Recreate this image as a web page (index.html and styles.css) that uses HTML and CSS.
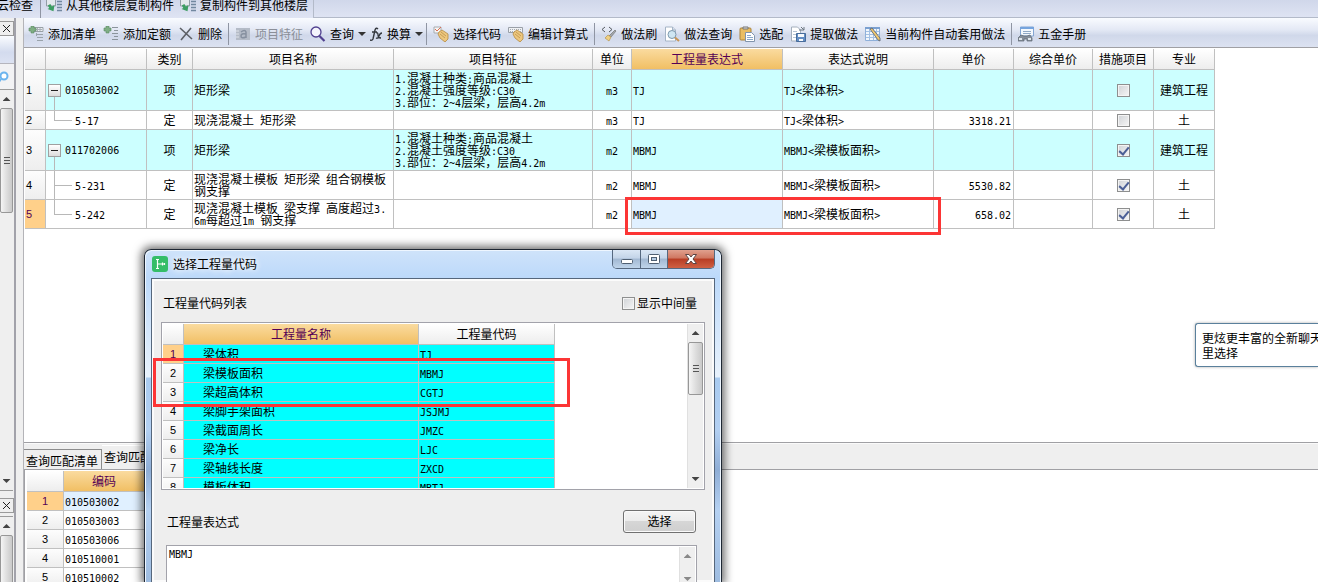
FILE: index.html
```html
<!DOCTYPE html>
<html lang="zh-CN">
<head>
<meta charset="utf-8">
<title>选择工程量代码</title>
<link rel="stylesheet" href="styles.css">
</head>
<body>
<svg class="defs" aria-hidden="true">
  <symbol id="list-add" viewBox="0 0 16 16">
    <path d="M6 1.500h9v4H6z" fill="#eef1f4" stroke="#98a0a6"/>
    <path d="M7 3.500h7M9.500 2v3M12 2v3" stroke="#a9b0b8"/>
    <path d="M1 2h2V0h3v2h2v3H6v2H3V5H1z" fill="#7fae84" stroke="#5d8b66" stroke-width=".6"/>
    <path d="M9 8.500h6M9 11.500h6M9 14.500h6M8.500 7v3" stroke="#9aa3ab"/>
  </symbol>
  <symbol id="quota-add" viewBox="0 0 16 16">
    <path d="M1 2h2V0h3v2h2v3H6v2H3V5H1z" fill="#7fae84" stroke="#5d8b66" stroke-width=".6"/>
    <path d="M9 1.500h6M11 4.500h4M9 7.500h6M11 10.500h4M9 13.500h6" stroke="#8b949c"/>
  </symbol>
  <symbol id="floor-copy" viewBox="0 0 16 16">
    <path d="M.5 0h9v9h-9z" fill="#e3e8ec" stroke="#929da6"/>
    <path d="M11 1.500h5M11 4.500h5M11 7.500h5M11 10.500h5M11 13.500h5" stroke="#7288a0" stroke-width="1.500"/>
    <path d="M3 7h3v3h3l-4 5-4-5h2z" fill="#3d9d62" transform="rotate(-30 5 10)"/>
  </symbol>
  <symbol id="hand" viewBox="0 0 16 16">
    <path d="M6 6l3-2 6 4v5l-3 3-5-4-2-4z" fill="#edc77e" stroke="#b58a43" stroke-width=".8"/>
    <path d="M7 8l5 4M8 6l5 4" stroke="#b58a43" stroke-width=".7"/>
  </symbol>
</svg>

<nav class="ribbon">
  <button class="tool">云检查</button>
  <i class="sep"></i>
  <button class="tool"><svg class="ico"><use href="#floor-copy"/></svg>从其他楼层复制构件</button>
  <button class="tool"><svg class="ico"><use href="#floor-copy"/></svg>复制构件到其他楼层</button>
  <i class="ribbon-rest"></i>
</nav>

<div class="workspace">
  <aside class="side">
    <button class="pane-close" aria-label="关闭"><svg viewBox="0 0 9 9"><path d="M1 1l7 7M8 1L1 8" stroke="#222"/></svg></button>
    <div class="pane-head"></div>
    <button class="pane-find" aria-label="查找"><svg viewBox="0 0 10 14"><circle cx="4" cy="6" r="3.500" fill="#fff" stroke="#6cb4ee" stroke-width="2"/><path d="M1 9l-2 3" stroke="#6cb4ee" stroke-width="2"/></svg></button>
    <div class="scroll side-scroll"><i class="up"></i><b class="thumb"></b><i class="down"></i></div>
    <button class="pane-close second" aria-label="关闭"><svg viewBox="0 0 9 9"><path d="M1 1l7 7M8 1L1 8" stroke="#222"/></svg></button>
    <div class="scroll side-scroll low"><i class="up"></i><b class="thumb"></b></div>
  </aside>

  <main class="main">
    <div class="toolbar">
      <button class="tool"><svg class="ico"><use href="#list-add"/></svg>添加清单</button>
      <button class="tool"><svg class="ico"><use href="#quota-add"/></svg>添加定额</button>
      <button class="tool"><svg class="ico" viewBox="0 0 16 16"><path d="M2 2l12 11M13 2L3 14" stroke="#5d6066" stroke-width="1.600" fill="none"/></svg>删除</button>
      <i class="sep"></i>
      <button class="tool" disabled><svg class="ico" viewBox="0 0 16 16"><rect x="1" y="2" width="14" height="12" fill="#b4bbc7"/><path d="M1 5h3M1 8h3M1 11h3" stroke="#dfe3ea"/><path d="M6 6q4-3 5 0v6M11 8q-5-1-5 2t5 1" stroke="#8690a0" stroke-width="1.500" fill="none"/></svg>项目特征</button>
      <button class="tool drop"><svg class="ico" viewBox="0 0 16 16"><circle cx="6" cy="6" r="5" fill="#f4f4fc" stroke="#50408f" stroke-width="1.300"/><path d="M9.500 10l5 5" stroke="#50408f" stroke-width="2.200"/></svg>查询<i class="caret"></i></button>
      <button class="tool drop"><svg class="ico fx" viewBox="0 0 13 16"><path d="M8 3q-2-2-3 1L3 13q-1 2-3 1M2 6h5" stroke="#34383e" stroke-width="1.400" fill="none"/><path d="M6 7q2-1 2 2t3 3M12 7q-2 0-3 3t-3 2" stroke="#34383e" stroke-width="1.300" fill="none"/></svg>换算<i class="caret"></i></button>
      <i class="sep"></i>
      <button class="tool"><svg class="ico" viewBox="0 0 16 16"><path d="M1 1h7v6H1z" fill="#f5f5f5" stroke="#a8abb0"/><path d="M2 3l2 2 4-4" stroke="#d96f55" fill="none"/><use href="#hand"/></svg>选择代码</button>
      <button class="tool"><svg class="ico" viewBox="0 0 16 16"><path d="M0.500 1.500h14v5h-14z" fill="#f0f2f5" stroke="#9aa0a8"/><path d="M2 3.500h12M2 5.500h12" stroke="#a4abb3" stroke-dasharray="1 1"/><use href="#hand"/></svg>编辑计算式</button>
      <i class="sep"></i>
      <button class="tool"><svg class="ico" viewBox="0 0 16 16"><path d="M4 1L1 3.500 4 6M8 1l3 2.500L8 6" stroke="#555a60" fill="none"/><path d="M14 4l1 1-5 6-2-1z" fill="#a3a8ac" stroke="#777" stroke-width=".7"/><path d="M7 9l3 2-2 4-4-3z" fill="#efd084" stroke="#b6954e" stroke-width=".7"/></svg>做法刷</button>
      <button class="tool"><svg class="ico" viewBox="0 0 16 16"><path d="M1.500 1h7l3 3v11h-10z" fill="#fff" stroke="#a5b4c6"/><path d="M8.500 1v3h3" fill="#d5e0ec" stroke="#a5b4c6"/><circle cx="8" cy="8.500" r="4" fill="#cfe6f2" stroke="#7d98ad"/><path d="M11 11.500l4 3.500" stroke="#c79557" stroke-width="2"/></svg>做法查询</button>
      <button class="tool"><svg class="ico" viewBox="0 0 16 16"><rect x="1" y="2" width="11" height="12" rx="1" fill="#e9bd63" stroke="#aa833c"/><path d="M4 3V1h5v2z" fill="#ddd" stroke="#777"/><path d="M6.500 6.500h6l3 3v6h-9z" fill="#fff" stroke="#8194ac"/><path d="M8 9.500h4M8 11.500h6M8 13.500h6" stroke="#8aa8cb"/></svg>选配</button>
      <button class="tool"><svg class="ico" viewBox="0 0 16 16"><path d="M1.500 1h6l3 3v11h-9z" fill="#fff" stroke="#a5b0bd"/><path d="M3 5.500h4M3 8.500h3M3 11.500h3" stroke="#b6c4d4"/><path d="M6.500 7.500h9v8h-9z" fill="#648ec4" stroke="#476c9b"/><path d="M8 8h6v3H8zM9 13h4v2H9z" fill="#f6f9fc"/><path d="M9 4h5V1M14 4l-3-3" stroke="#6d7780" fill="none"/></svg>提取做法</button>
      <button class="tool"><svg class="ico" viewBox="0 0 16 16"><path d="M.5 1.500h14v13H.5z" fill="#f1f6fc" stroke="#8fb0da"/><path d="M1 5.500h13M1 8.500h13M1 11.500h13M4.500 2v12M8.500 2v12M11.500 2v12" stroke="#a3c0e4"/><path d="M0 1h15v2H0z" fill="#7ba0d0"/><path d="M5 3l2-1 8 10v3l-2-1z" fill="#f1c970" stroke="#536075" stroke-width=".8"/></svg>当前构件自动套用做法</button>
      <i class="sep"></i>
      <button class="tool"><svg class="ico" viewBox="0 0 16 16"><path d="M2.500 1h13v9h-13z" fill="#f4f8fd" stroke="#83a5d2"/><path d="M2 1h14v2H2z" fill="#76a4de"/><path d="M5 5.500h8M5 7.500h8" stroke="#90a9c5"/><path d="M0 12l3-3 3 1h3l3-1 2 3v3H9v-2H6v2H0z" fill="#868f9a" stroke="#5c6570" stroke-width=".7"/><path d="M1 12h3v2H1zM10 12h3v2h-3z" fill="#dfe6ec"/></svg>五金手册</button>
    </div>

    <section class="bill">
      <table class="grid">
        <colgroup><col class="w21"><col class="w101"><col class="w46"><col class="w201"><col class="w199"><col class="w39"><col class="w151"><col class="w151"><col class="w80"><col class="w79"><col class="w61"><col class="w61"></colgroup>
        <thead>
          <tr><th></th><th>编码</th><th>类别</th><th>项目名称</th><th>项目特征</th><th>单位</th><th class="hot">工程量表达式</th><th>表达式说明</th><th>单价</th><th>综合单价</th><th>措施项目</th><th>专业</th></tr>
        </thead>
        <tbody>
          <tr class="item">
            <th scope="row">1</th>
            <td class="tree parent"><button class="fold" aria-label="折叠"></button><span class="n">010503002</span></td>
            <td class="c">项</td><td>矩形梁</td>
            <td><span class="n">1.</span>混凝土种类<span class="n">:</span>商品混凝土<br><span class="n">2.</span>混凝土强度等级<span class="n">:C30</span><br><span class="n">3.</span>部位：<span class="n">2~4</span>层梁，层高<span class="n">4.2m</span></td>
            <td class="c"><span class="n">m3</span></td><td><span class="n">TJ</span></td><td><span class="n">TJ&lt;</span>梁体积<span class="n">&gt;</span></td><td></td><td></td>
            <td class="c"><input type="checkbox" class="check" aria-label="措施项目 1"></td><td class="c">建筑工程</td>
          </tr>
          <tr>
            <th scope="row">2</th>
            <td class="tree child last"><span class="n">5-17</span></td>
            <td class="c">定</td><td>现浇混凝土<span class="n"> </span>矩形梁</td><td></td>
            <td class="c"><span class="n">m3</span></td><td><span class="n">TJ</span></td><td><span class="n">TJ&lt;</span>梁体积<span class="n">&gt;</span></td><td class="r"><span class="n">3318.21</span></td><td></td>
            <td class="c"><input type="checkbox" class="check" aria-label="措施项目 2"></td><td class="c">土</td>
          </tr>
          <tr class="item">
            <th scope="row">3</th>
            <td class="tree parent"><button class="fold" aria-label="折叠"></button><span class="n">011702006</span></td>
            <td class="c">项</td><td>矩形梁</td>
            <td><span class="n">1.</span>混凝土种类<span class="n">:</span>商品混凝土<br><span class="n">2.</span>混凝土强度等级<span class="n">:C30</span><br><span class="n">3.</span>部位：<span class="n">2~4</span>层梁，层高<span class="n">4.2m</span></td>
            <td class="c"><span class="n">m2</span></td><td><span class="n">MBMJ</span></td><td><span class="n">MBMJ&lt;</span>梁模板面积<span class="n">&gt;</span></td><td></td><td></td>
            <td class="c"><input type="checkbox" class="check" aria-label="措施项目 3" checked></td><td class="c">建筑工程</td>
          </tr>
          <tr>
            <th scope="row">4</th>
            <td class="tree child"><span class="n">5-231</span></td>
            <td class="c">定</td><td>现浇混凝土模板<span class="n"> </span>矩形梁<span class="n"> </span>组合钢模板<br>钢支撑</td><td></td>
            <td class="c"><span class="n">m2</span></td><td><span class="n">MBMJ</span></td><td><span class="n">MBMJ&lt;</span>梁模板面积<span class="n">&gt;</span></td><td class="r"><span class="n">5530.82</span></td><td></td>
            <td class="c"><input type="checkbox" class="check" aria-label="措施项目 4" checked></td><td class="c">土</td>
          </tr>
          <tr>
            <th scope="row" class="current">5</th>
            <td class="tree child last"><span class="n">5-242</span></td>
            <td class="c">定</td><td>现浇混凝土模板<span class="n"> </span>梁支撑<span class="n"> </span>高度超过<span class="n">3.</span><br><span class="n">6m</span>每超过<span class="n">1m </span>钢支撑</td><td></td>
            <td class="c"><span class="n">m2</span></td><td class="picked"><span class="n">MBMJ</span></td><td><span class="n">MBMJ&lt;</span>梁模板面积<span class="n">&gt;</span></td><td class="r"><span class="n">658.02</span></td><td></td>
            <td class="c"><input type="checkbox" class="check" aria-label="措施项目 5" checked></td><td class="c">土</td>
          </tr>
        </tbody>
      </table>
    </section>

    <div class="tabs">
      <button class="tab">查询匹配清单</button>
      <button class="tab active">查询匹配定额</button>
    </div>
    <section class="match">
      <table class="grid codes">
        <colgroup><col class="w37"><col class="w81"></colgroup>
        <thead><tr><th></th><th class="hot">编码</th></tr></thead>
        <tbody>
          <tr><th scope="row" class="current">1</th><td class="picked"><span class="n">010503002</span></td></tr>
          <tr><th scope="row">2</th><td><span class="n">010503003</span></td></tr>
          <tr><th scope="row">3</th><td><span class="n">010503006</span></td></tr>
          <tr><th scope="row">4</th><td><span class="n">010510001</span></td></tr>
          <tr><th scope="row">5</th><td><span class="n">010510002</span></td></tr>
        </tbody>
      </table>
    </section>
  </main>
</div>

<div class="dialog" role="dialog" aria-labelledby="dlg-title">
  <header class="titlebar">
    <svg class="logo" viewBox="0 0 16 16"><rect width="16" height="16" rx="3" fill="#35bd69"/><path d="M4 3.500h3M4 12.500h3M5.500 3.500v9M5.500 8h7M10.500 6.500v3M12.500 7v2" stroke="#fff" stroke-width="1.200" fill="none"/></svg>
    <h1 id="dlg-title">选择工程量代码</h1>
    <div class="winbtns">
      <button class="min" aria-label="最小化"><svg viewBox="0 0 14 12"><rect x="1.500" y="6.500" width="11" height="4" rx="1" fill="#fff" stroke="#4f5f72"/></svg></button>
      <button class="max" aria-label="最大化"><svg viewBox="0 0 14 12"><rect x="1.500" y="1.500" width="11" height="9" rx="1" fill="#fff" stroke="#4f5f72"/><rect x="4.500" y="4.500" width="5" height="3" fill="#b5cce4" stroke="#4f5f72"/></svg></button>
      <button class="close" aria-label="关闭"><svg viewBox="0 0 14 12"><path d="M1.500 1.500h3.500l2 2.500 2-2.500h3.500L9 6l3.500 4.500H9L7 8l-2 2.500H1.500L5 6z" fill="#fff" stroke="#5c4545"/></svg></button>
    </div>
  </header>
  <div class="sheet">
    <div class="row head">
      <span>工程量代码列表</span>
      <label class="opt"><input type="checkbox" class="check">显示中间量</label>
    </div>
    <div class="listbox">
      <div class="view">
        <table class="grid quantities">
          <colgroup><col class="w21"><col class="w235"><col class="w136"></colgroup>
          <thead><tr><th></th><th class="hot">工程量名称</th><th>工程量代码</th></tr></thead>
          <tbody>
            <tr><th scope="row" class="current">1</th><td>梁体积</td><td><span class="n">TJ</span></td></tr>
            <tr><th scope="row">2</th><td>梁模板面积</td><td><span class="n">MBMJ</span></td></tr>
            <tr><th scope="row">3</th><td>梁超高体积</td><td><span class="n">CGTJ</span></td></tr>
            <tr><th scope="row">4</th><td>梁脚手架面积</td><td><span class="n">JSJMJ</span></td></tr>
            <tr><th scope="row">5</th><td>梁截面周长</td><td><span class="n">JMZC</span></td></tr>
            <tr><th scope="row">6</th><td>梁净长</td><td><span class="n">LJC</span></td></tr>
            <tr><th scope="row">7</th><td>梁轴线长度</td><td><span class="n">ZXCD</span></td></tr>
            <tr><th scope="row">8</th><td>模板体积</td><td><span class="n">MBTJ</span></td></tr>
          </tbody>
        </table>
      </div>
      <div class="scroll"><i class="up"></i><b class="thumb"></b><i class="down"></i></div>
    </div>
    <div class="row pick">
      <label for="expr">工程量表达式</label>
      <button class="push">选择</button>
    </div>
    <div class="exprbox">
      <textarea id="expr" spellcheck="false">MBMJ</textarea>
      <div class="scroll faint"><i class="up"></i><i class="down"></i></div>
    </div>
  </div>
</div>

<div class="mark mark-cell"></div>
<div class="mark mark-rows"></div>
<div class="balloon">更炫更丰富的全新聊天<br>里选择</div>
</body>
</html>
```
FILE: styles.css
```css
* { box-sizing: border-box; }

body {
  margin: 0;
  height: 100vh;
  position: relative;
  display: flex;
  flex-direction: column;
  overflow: hidden;
  background: #efefef;
  color: #000;
  font: 12px/12px "Noto Sans CJK SC", sans-serif;
}

button { margin: 0; padding: 0; border: 0; background: none; font: inherit; color: inherit; }
.defs { position: absolute; width: 0; height: 0; }

/* half-width characters */
.n { font-family: "DejaVu Sans Mono", monospace; font-size: 10px; line-height: 0; white-space: pre; }

/* toolbars */
.tool { display: flex; align-items: center; gap: 4px; white-space: nowrap; flex: none; }
.tool:disabled { color: #8b8f98; }
.drop { margin-right: -3px; }
.ico { width: 16px; height: 16px; flex: none; }
.fx { width: 13px; }
.sep { width: 1px; height: 22px; margin: 0 -1px; background: #8f95a3; flex: none; }
.caret { border: 4px solid transparent; border-top-color: #333; border-bottom: 0; }

.ribbon {
  flex: none;
  display: flex;
  align-items: center;
  gap: 7px;
  height: 18px;
  padding-bottom: 9px;
  margin-left: -3px;
  overflow: hidden;
  background: linear-gradient(#d0d7ea, #dfe4f3);
}
.ribbon .sep { height: 26px; margin-left: 0; }
.ribbon .ico { margin-left: -1px; }
.ribbon-rest { flex: 1 0 0; align-self: flex-start; height: 18px; margin-left: -2px; border: solid #b3bac9; border-width: 0 0 1px 1px; }

.workspace { flex: 1; display: flex; min-height: 0; }

/* left pane */
.side { flex: none; width: 16px; margin-right: 7px; display: flex; flex-direction: column; border-right: 2px solid #a2a2aa; overflow: hidden; }
.pane-close { height: 15px; margin-top: 3px; flex: none; border: 1px solid #9a9a9a; border-left: 0; display: flex; align-items: center; padding-left: 2px; }
.pane-close svg { width: 9px; height: 9px; }
.pane-head { flex: none; height: 28px; background: linear-gradient(#fafcff, #d3dbee 60%, #dce2f2); border-bottom: 1px solid #b5b5bd; }
.pane-find { flex: none; height: 26px; display: flex; align-items: center; background: #f2f2f4; border-bottom: 1px solid #9b9b9b; }
.pane-find svg { width: 10px; height: 14px; }
.pane-close.second { margin-top: 7px; }
.side-scroll { height: 401px; border-bottom: 1px solid #9b9b9b; }
.side-scroll .thumb { height: 105px; }
.side-scroll.low { height: auto; flex: 1; margin-top: 3px; border-top: 1px solid #9b9b9b; border-bottom: 0; }
.side-scroll.low .thumb { height: 120px; }

.scroll { flex: none; width: 16px; display: flex; flex-direction: column; align-items: center; background: #efefef; border-left: 1px solid #e0e0e0; }
.scroll.side-scroll { width: 13px; border-left: 0; }
.scroll .up, .scroll .down { flex: none; width: 8px; height: 18px; background: #444; clip-path: polygon(0 11px, 4px 7px, 8px 11px); }
.scroll .down { margin-top: auto; clip-path: polygon(0 7px, 8px 7px, 4px 11px); }
.scroll.faint .up, .scroll.faint .down { background: #888; }
.scroll.faint .up, .scroll.faint .down { height: 12px; }
.thumb { flex: none; width: 100%; height: 53px; border: 1px solid #979797; border-radius: 2px; background: repeating-linear-gradient(#555 0 1px, #ddd 1px 3px) center / 6px 8px no-repeat, linear-gradient(90deg, #f5f5f5, #dedede 50%, #c9c9c9); }

/* main area */
.main { flex: 1; min-width: 0; display: flex; flex-direction: column; border-left: 1px solid #b4b4b8; }
.toolbar { flex: none; display: flex; align-items: center; gap: 7px; height: 29px; padding: 2px 4px 0; overflow: hidden; background: linear-gradient(#f9fbff, #e4e9f5 40%, #d0d8ea 60%, #dce2f1); }

.bill { flex: none; height: 396px; border: solid #a0a0a4; border-width: 1px 0; padding: 1px; background: #fff; overflow: hidden; }

.grid { border-collapse: separate; border-spacing: 0; table-layout: fixed; width: 0; white-space: nowrap; }
.grid th, .grid td { border: solid #c0c0c0; border-width: 0 1px 1px 0; padding: 2px 1px; height: 19px; font-weight: normal; text-align: left; vertical-align: middle; overflow: hidden; }
.grid thead th { height: 21px; text-align: center; background: linear-gradient(#fff, #ededed); }
.grid tbody th { background: linear-gradient(#fdfdfd, #eee); font-family: "Liberation Sans", sans-serif; font-size: 11px; }
.grid thead .hot { background: linear-gradient(#fadb9f, #f1bf64); color: #550055; }
.grid tbody .current { background: #ffd08a; color: #550055; }
.grid .picked { background: #e0f0ff; }
.grid .c { text-align: center; }
.grid .r { text-align: right; padding-right: 2px; }
.item td { background: #ccffff; }

.w21 { width: 21px; } .w37 { width: 37px; } .w39 { width: 39px; } .w46 { width: 46px; }
.w61 { width: 61px; } .w79 { width: 79px; } .w80 { width: 80px; } .w81 { width: 81px; }
.w101 { width: 101px; } .w136 { width: 136px; } .w151 { width: 151px; }
.w199 { width: 199px; } .w201 { width: 201px; } .w235 { width: 235px; }

/* code tree */
.grid .tree { position: relative; padding-left: 29px; }
.grid .parent { padding-left: 2px; }
.fold { width: 13px; height: 13px; margin-right: 4px; vertical-align: middle; border: 1px solid #a0a0a0; background: linear-gradient(#222, #222) center / 7px 1px no-repeat, linear-gradient(#fff, #ddd); }
.parent::after { content: ""; position: absolute; left: 8px; top: 27px; bottom: 0; border-left: 1px solid #b8b8b8; }
.child::before { content: ""; position: absolute; left: 8px; top: 0; width: 17px; height: 50%; border: solid #b8b8b8; border-width: 0 0 1px 1px; }
.child::after { content: ""; position: absolute; left: 8px; top: 50%; bottom: 0; border-left: 1px solid #b8b8b8; }
.last::after { display: none; }

.check { appearance: none; position: relative; flex: none; width: 13px; height: 13px; margin: 0; vertical-align: middle; border: 1px solid #8e8f8f; background: linear-gradient(135deg, #cfd2d6, #f6f6f6); box-shadow: inset 0 0 0 1px #f4f4f4; }
.check:checked::after { content: ""; position: absolute; left: 3px; top: 0; width: 4px; height: 8px; border: solid #4b5f96; border-width: 0 2px 2px 0; transform: rotate(40deg); }

/* lower pane */
.tabs { flex: none; display: flex; align-items: flex-end; height: 27px; border-top: 1px solid #fafafa; border-bottom: 1px solid #a0a0a4; }
.tab { height: 20px; padding: 2px 3px 0 2px; border: solid #8c8c8c; border-width: 1px 1px 0 0; }
.tab.active { height: 24px; padding-bottom: 3px; border: 0; border-top: 1px solid #fff; }
.match { flex: 1; min-height: 0; padding: 1px 2px; overflow: hidden; background: #fff; border-left: 1px solid #a0a0a4; }
.codes tbody th { text-align: center; }

/* dialog */
.dialog {
  position: absolute;
  left: 144px;
  top: 249px;
  bottom: 0;
  width: 578px;
  display: flex;
  flex-direction: column;
  padding: 0 6px;
  border: 1px solid #1e2733;
  border-bottom: 0;
  border-radius: 7px 7px 0 0;
  background: linear-gradient(#cfe3fa 0, #bcd9fa 28px, #e8f2fc 127px, #a9cbf0 128px, #b3d0f2 180px, #8faed6 220px, #b5d1f2 260px, #9ebce0);
  box-shadow: inset 1px 1px 0 #eef6ff, inset -1px 0 0 #eef6ff, 0 0 9px 3px rgba(0, 0, 0, .55);
}
.titlebar { flex: none; height: 28px; display: flex; align-items: center; gap: 5px; padding-left: 1px; }
.titlebar h1 { flex: 1; margin: 0; font-size: 12px; line-height: 16px; font-weight: normal; text-shadow: 0 0 6px #fff, 0 0 6px #fff; }
.logo { width: 16px; height: 16px; }
.winbtns { display: flex; align-self: flex-start; height: 19px; border: 1px solid #56687f; border-top: 0; border-radius: 0 0 5px 5px; overflow: hidden; }
.winbtns button { width: 28px; display: flex; align-items: center; justify-content: center; border-right: 1px solid #56687f; background: linear-gradient(#dbe7f5, #c3d4e8 45%, #a2b8d2 50%, #bfd4ea); }
.winbtns .max { width: 27px; }
.winbtns .close { width: 46px; border-right: 0; background: linear-gradient(#e0a08e, #cf7660 45%, #b83d24 50%, #cf6043); }
.winbtns svg { width: 14px; height: 12px; }

.sheet { flex: 1; min-height: 0; display: flex; flex-direction: column; padding: 17px 9px 0; border: 1px solid #56677c; border-bottom: 0; background: #eee; box-shadow: inset 0 0 0 2px #fbfbfb; }
.row { flex: none; display: flex; align-items: center; justify-content: space-between; }
.head { height: 14px; padding: 0 8px 0 2px; }
.opt { display: flex; align-items: center; gap: 2px; }
.listbox { flex: none; height: 168px; margin-top: 12px; display: flex; padding: 1px; border: 1px solid #a2a2aa; background: #fff; }
.view { flex: 1; min-width: 0; overflow: hidden; }
.quantities tbody td { background: #00ffff; }
.quantities tbody th { text-align: center; }
.quantities td:nth-child(2) { padding-left: 19px; }
.pick { margin-top: 20px; padding: 0 9px 0 6px; }
.push { width: 73px; height: 23px; padding-bottom: 2px; border: 1px solid #707070; border-radius: 3px; background: linear-gradient(#f4f4f4, #ebebeb 50%, #d6d6d6 50%, #cfcfcf); box-shadow: inset 0 0 0 1px #fafafa; }
.exprbox { flex: 1; min-height: 0; display: flex; margin: 12px 8px 0 5px; padding: 1px 1px 0; border: 1px solid #a2a2aa; border-bottom: 0; background: #fff; }
.exprbox textarea { flex: 1; min-width: 0; margin: 0; padding: 1px; border: 0; outline: 0; resize: none; overflow: hidden; background: #fff; color: #000; font: 10px/13px "DejaVu Sans Mono", monospace; }

/* overlays */
.mark { position: absolute; border: 3px solid #fc3535; pointer-events: none; }
.mark-cell { left: 625px; top: 197px; width: 316px; height: 38px; }
.mark-rows { left: 153px; top: 358px; width: 417px; height: 49px; }
.balloon { position: absolute; left: 1195px; right: 0; top: 323px; padding: 6px; border: 1px solid #5a809c; border-right: 0; border-radius: 3px 0 0 3px; background: #fff; box-shadow: 0 0 3px #aaa; line-height: 15px; white-space: nowrap; overflow: hidden; }
```
